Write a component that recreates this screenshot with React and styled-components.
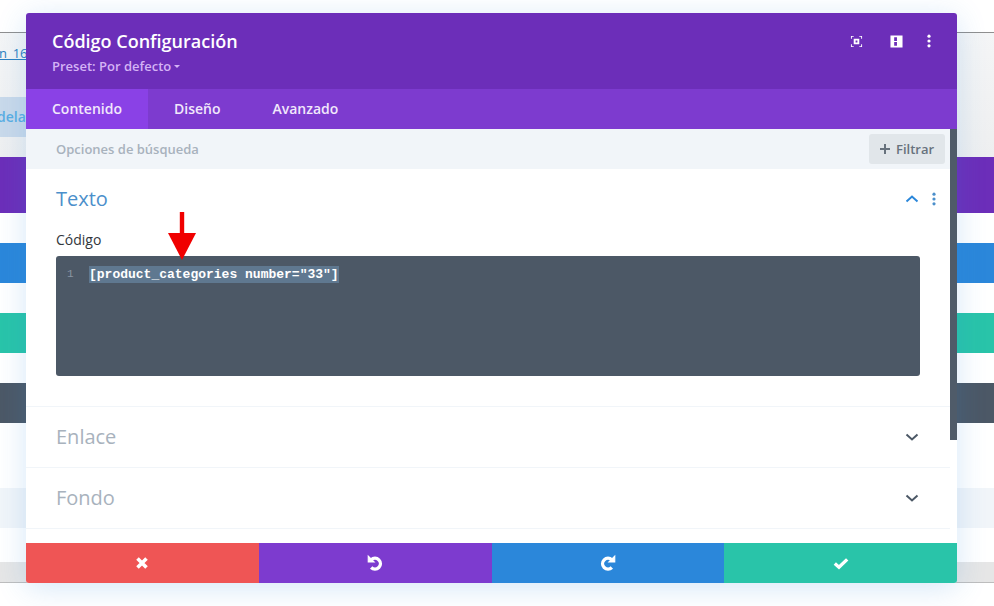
import React from 'react';
import styled, { createGlobalStyle } from 'styled-components';

const GlobalStyle = createGlobalStyle`
  html, body {
    margin: 0;
    padding: 0;
    background: #fff;
  }
  body {
    font-family: 'Open Sans', 'Noto Sans', sans-serif;
    overflow: hidden;
  }
`;

const Page = styled.div`
  position: relative;
  width: 994px;
  height: 606px;
  overflow: hidden;
  background: #fff;
`;

const Backdrop = styled.div`
  display: flex;
  flex-direction: column;
  padding-top: 32px;
`;

const TopStrip = styled.div`
  height: 125px;
  box-sizing: border-box;
  border-top: 1px solid #8f8f8f;
  background: linear-gradient(#f4f5f6, #eeeff0);
  display: flex;
  flex-direction: column;
  align-items: flex-start;
  gap: 35px;
  padding-top: 11px;
`;

const PageLink = styled.a`
  font-size: 13px;
  line-height: 18px;
  color: #2a7fc0;
  text-decoration: underline;
  margin-left: -1px;
`;

const PageChip = styled.div`
  width: 60px;
  height: 40px;
  background: #c9d9ea;
  color: #5aaee3;
  font-size: 14px;
  font-weight: 600;
  line-height: 40px;
  text-indent: -3px;
`;

const Band = styled.div`
  height: ${(p) => p.$h}px;
  margin-bottom: ${(p) => p.$gap}px;
  background: ${(p) => p.$bg};
  flex: none;
`;

const Modal = styled.div`
  position: absolute;
  left: 26px;
  top: 13px;
  width: 931px;
  height: 570px;
  display: flex;
  flex-direction: column;
  border-radius: 3px;
  overflow: hidden;
  background: #fff;
  box-shadow: 0 5px 30px rgba(43, 135, 218, 0.2);
`;

const Header = styled.header`
  height: 76px;
  flex: none;
  background: #6c2eb9;
  color: #fff;
  display: flex;
  justify-content: space-between;
  padding: 16px 26px 0 26px;
  box-sizing: border-box;
`;

const Title = styled.h1`
  margin: 0;
  font-size: 18px;
  line-height: 25px;
  font-weight: 600;
`;

const Preset = styled.div`
  margin-top: 4px;
  font-size: 13px;
  line-height: 17px;
  font-weight: 600;
  color: #d4b3f5;
  display: flex;
  align-items: center;
  gap: 3px;
`;

const Caret = styled.span`
  width: 0;
  height: 0;
  border-left: 3px solid transparent;
  border-right: 3px solid transparent;
  border-top: 3px solid #d4b3f5;
`;

const HeaderTools = styled.div`
  display: flex;
  gap: 27px;
  align-items: center;
  height: 24px;

  & > :last-child {
    margin-left: -3px;
  }
`;

const ToolIcon = styled.svg`
  display: block;
  width: 13px;
  height: 13px;
  fill: #fff;
`;

const Tabs = styled.nav`
  height: 40px;
  flex: none;
  background: #7d3bcf;
  display: flex;
`;

const Tab = styled.div`
  height: 40px;
  padding: 0 26px;
  font-size: 14px;
  font-weight: 600;
  line-height: 40px;
  color: #f1e8fb;
  background: ${(p) => (p.$active ? '#8a41e6' : 'transparent')};
`;

const Content = styled.div`
  position: relative;
  flex: 1;
  min-height: 0;
  display: flex;
  flex-direction: column;
  padding-right: 7px;
`;

const SearchBar = styled.div`
  height: 40px;
  flex: none;
  background: #f1f5f9;
  display: flex;
  align-items: center;
  justify-content: space-between;
  padding: 0 5px 0 30px;
`;

const SearchHint = styled.span`
  font-size: 13px;
  font-weight: 600;
  color: #a8b2bd;
`;

const FilterButton = styled.div`
  width: 76px;
  height: 30px;
  background: #e1e6ea;
  border-radius: 3px;
  color: #67727d;
  font-size: 13px;
  font-weight: 600;
  display: flex;
  align-items: center;
  justify-content: center;
  gap: 6px;
`;

const ScrollThumb = styled.div`
  position: absolute;
  top: 0;
  right: 0;
  width: 7px;
  height: 311px;
  background: #4f5b69;
`;

const Section = styled.section`
  padding: 15px 14px 15px 30px;
  border-bottom: 1px solid #f1f5f9;
  ${(p) => p.$open && 'padding-bottom: 30px;'}
`;

const SectionHead = styled.div`
  display: flex;
  align-items: center;
  justify-content: space-between;
  height: 30px;
`;

const SectionTitle = styled.h2`
  margin: 0;
  font-size: 20px;
  line-height: 30px;
  font-weight: 400;
  color: ${(p) => (p.$open ? '#4b8fcb' : '#a8b2bd')};
`;

const SectionIcons = styled.div`
  display: flex;
  align-items: center;
  gap: 13px;
`;

const DotsSpacer = styled.span`
  width: 4px;
`;

const FieldLabel = styled.div`
  margin-top: 16px;
  font-size: 14px;
  line-height: 20px;
  font-weight: 500;
  color: #32373c;
`;

const CodeBox = styled.div`
  margin: 6px 16px 0 0;
  height: 120px;
  background: #4c5866;
  border-radius: 3px;
  display: flex;
  padding: 10px 0 0 11px;
  box-sizing: border-box;
  font-family: 'Liberation Mono', monospace;
  font-size: 13px;
  line-height: 17px;
`;

const LineNumber = styled.span`
  width: 22px;
  flex: none;
  color: #8995a3;
  font-size: 11px;
`;

const CodeLine = styled.span`
  align-self: flex-start;
  background: #5f7890;
  color: #fff;
  font-weight: 700;
`;

const Arrow = styled.svg`
  position: absolute;
  left: 168px;
  top: 212px;
  width: 28px;
  height: 48px;
`;

const Footer = styled.footer`
  height: 40px;
  flex: none;
  display: grid;
  grid-template-columns: repeat(4, 1fr);
`;

const FooterButton = styled.div`
  background: ${(p) => p.$bg};
  display: flex;
  align-items: center;
  justify-content: center;
`;

const FooterIcon = styled.svg`
  display: block;
  width: ${(p) => p.$size || 16}px;
  height: ${(p) => p.$size || 16}px;
  fill: none;
  stroke: #fff;
`;

const Chevron = ({ up, color }) => (
  <svg width="14" height="10" viewBox="0 0 14 10" fill="none" stroke={color} strokeWidth="2">
    <path d={up ? 'M1.5 7.5 7 2.5l5.5 5' : 'M1.5 2.5 7 7.5l5.5-5'} />
  </svg>
);

const Dots = ({ color }) => (
  <svg width="4" height="14" viewBox="0 0 4 14" fill={color}>
    <circle cx="2" cy="2.2" r="1.6" />
    <circle cx="2" cy="7" r="1.6" />
    <circle cx="2" cy="11.8" r="1.6" />
  </svg>
);

const sections = ['Enlace', 'Fondo'];

const App = () => (
  <Page>
    <GlobalStyle />
    <Backdrop>
      <TopStrip>
        <PageLink>n_16</PageLink>
        <PageChip>delan</PageChip>
      </TopStrip>
      <Band $h={56} $gap={30} $bg="#6c2eb9" />
      <Band $h={40} $gap={30} $bg="#2b87da" />
      <Band $h={40} $gap={30} $bg="#29c4a9" />
      <Band $h={40} $gap={65} $bg="#4c5866" />
      <Band $h={40} $gap={34} $bg="#f1f5f9" />
      <Band $h={20} $gap={0} $bg="#e6e6e6" />
      <Band $h={1} $gap={0} $bg="#bdbdbd" />
    </Backdrop>

    <Modal>
      <Header>
        <div>
          <Title>Código Configuración</Title>
          <Preset>
            Preset: Por defecto <Caret />
          </Preset>
        </div>
        <HeaderTools>
          <ToolIcon viewBox="0 0 14 14">
            <path d="M1 1h3v1H2v2H1zM10 1h3v3h-1V2h-2zM1 10h1v2h2v1H1zM12 10h1v3h-3v-1h2z" />
            <path fillRule="evenodd" d="M4 4h6v6H4zM6 6v2h2V6z" />
          </ToolIcon>
          <ToolIcon viewBox="0 0 14 14">
            <path fillRule="evenodd" d="M0.5 0.5h13v13h-13zM4.5 2.5v4h3v-4zM4.5 7.5v4h3v-4z" />
          </ToolIcon>
          <Dots color="#fff" />
        </HeaderTools>
      </Header>

      <Tabs>
        <Tab $active>Contenido</Tab>
        <Tab>Diseño</Tab>
        <Tab>Avanzado</Tab>
      </Tabs>

      <Content>
        <ScrollThumb />
        <SearchBar>
          <SearchHint>Opciones de búsqueda</SearchHint>
          <FilterButton>
            <svg width="10" height="10" viewBox="0 0 10 10" fill="#67727d">
              <path d="M4 0h2v4h4v2H6v4H4V6H0V4h4z" />
            </svg>
            Filtrar
          </FilterButton>
        </SearchBar>
        <Section $open>
          <SectionHead>
            <SectionTitle $open>Texto</SectionTitle>
            <SectionIcons>
              <Chevron up color="#2b87da" />
              <Dots color="#4b8fcb" />
            </SectionIcons>
          </SectionHead>
          <FieldLabel>Código</FieldLabel>
          <CodeBox>
            <LineNumber>1</LineNumber>
            <CodeLine>[product_categories number="33"]</CodeLine>
          </CodeBox>
        </Section>
        {sections.map((name) => (
          <Section key={name}>
            <SectionHead>
              <SectionTitle>{name}</SectionTitle>
              <SectionIcons>
                <Chevron color="#4c5866" />
                <DotsSpacer />
              </SectionIcons>
            </SectionHead>
          </Section>
        ))}
      </Content>

      <Footer>
        <FooterButton $bg="#ef5555">
          <FooterIcon viewBox="0 0 16 16" strokeWidth="3.6">
            <path d="M3.5 3.5l9 9M12.5 3.5l-9 9" />
          </FooterIcon>
        </FooterButton>
        <FooterButton $bg="#7d3bcf">
          <FooterIcon $size={18} viewBox="0 0 16 16" strokeWidth="3">
            <path d="M4.6 5.2A4.8 4.8 0 1 1 4.6 12" />
            <path d="M2 1.8v5.2h5.2z" strokeWidth="1" fill="#fff" />
          </FooterIcon>
        </FooterButton>
        <FooterButton $bg="#2b87da">
          <FooterIcon $size={18} viewBox="0 0 16 16" strokeWidth="3">
            <path d="M11.4 5.2A4.8 4.8 0 1 0 11.4 12" />
            <path d="M14 1.8v5.2H8.8z" strokeWidth="1" fill="#fff" />
          </FooterIcon>
        </FooterButton>
        <FooterButton $bg="#29c4a9">
          <FooterIcon $size={18} viewBox="0 0 16 16" strokeWidth="3">
            <path d="M2.5 8.5l3.7 3.3 7.3-7" />
          </FooterIcon>
        </FooterButton>
      </Footer>
    </Modal>

    <Arrow viewBox="0 0 28 48">
      <path d="M11.8 0h4.4v21h-4.4z" fill="#f00000" />
      <path d="M0 21h28L14 48z" fill="#f00000" />
    </Arrow>
  </Page>
);

export default App;
